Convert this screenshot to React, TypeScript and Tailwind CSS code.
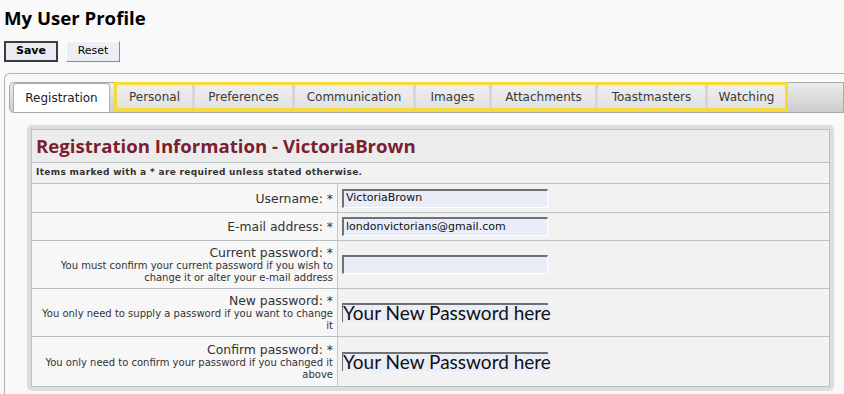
const tabs = [
  { label: 'Personal', w: 'w-[75px]' },
  { label: 'Preferences', w: 'w-[97px]' },
  { label: 'Communication', w: 'w-[118px]' },
  { label: 'Images', w: 'w-[73px]' },
  { label: 'Attachments', w: 'w-[103px]' },
  { label: 'Toastmasters', w: 'w-[107px]' },
  { label: 'Watching', w: 'w-[77px]' },
];

const rows = [
  { label: 'Username: *', h: 'h-[29px]', value: 'VictoriaBrown' },
  { label: 'E-mail address: *', h: 'h-[28px]', value: 'londonvictorians@gmail.com' },
  {
    label: 'Current password: *',
    h: 'h-[48px]',
    note: 'You must confirm your current password if you wish to change it or alter your e-mail address',
    value: '',
  },
  {
    label: 'New password: *',
    h: 'h-[48px]',
    note: 'You only need to supply a password if you want to change it',
    value: 'Your New Password here',
    big: true,
  },
  {
    label: 'Confirm password: *',
    h: 'h-[49px]',
    note: 'You only need to confirm your password if you changed it above',
    value: 'Your New Password here',
    big: true,
  },
];

export default function App() {
  return (
    <div className="min-h-screen bg-[#f9f9f9] font-['DejaVu_Sans',Verdana,sans-serif] text-[#222]">
      <h1 className="pl-[4px] pt-[6px] h-[41px] text-[18.6px] leading-[24px] font-bold font-['Open_Sans',sans-serif] text-black">
        My User Profile
      </h1>

      <div className="flex gap-[8px] pl-[4px] h-[32px]">
        <button className="w-[54px] h-[21px] bg-[#e9ecf3] border-2 border-[#3c3c3c] text-[11px] font-bold text-black">
          Save
        </button>
        <button className="w-[54px] h-[21px] bg-[#eceef3] border border-t-white border-l-white border-b-[#8a8a8a] border-r-[#8a8a8a] text-[11px] text-black">
          Reset
        </button>
      </div>

      <div className="ml-[4px] border-l border-t border-[#b4b4b4] rounded-tl-[6px] pt-[8px] pl-[4px] h-[321px]">
        <div className="flex items-end h-[31px] border border-[#a8a8a8] rounded-l-[5px] bg-gradient-to-b from-[#ececec] to-[#cdcdcd] pl-[3px]">
          <div className="w-[97px] h-[29px] bg-white border border-b-0 border-[#b0b0b0] rounded-t-[4px] flex items-center justify-center text-[12px] text-[#222]">
            Registration
          </div>
          <div className="ml-[4px] mb-[1px] h-[29px] flex gap-[3px] border-[3px] border-[#f4da3a] bg-[#d6d6d6]">
            {tabs.map((t) => (
              <div
                key={t.label}
                className={`${t.w} h-full flex items-center justify-center text-[12px] text-[#3a3a3a] bg-gradient-to-b from-[#eeeeee] to-[#e2e2e2]`}
              >
                {t.label}
              </div>
            ))}
          </div>
        </div>

        <div className="mt-[12px] ml-[18px] mr-[10px] border-[4px] border-[#dddddd] rounded-[5px]">
          <div className="border border-[#b9c2c2] bg-[#f2f2f2]">
            <div className="h-[33px] bg-[#ececec] border-b border-[#b9c2c2] pl-[4px] flex items-center text-[18.6px] font-bold font-['Open_Sans',sans-serif] text-[#7b1e30]">
              Registration Information - VictoriaBrown
            </div>
            <div className="h-[21px] border-b border-[#b9c2c2] pl-[4px] flex items-center text-[9px] tracking-[0.33px] font-bold text-[#333]">
              Items marked with a * are required unless stated otherwise.
            </div>
            {rows.map((r, i) => (
              <div
                key={r.label}
                className={`flex ${r.h} ${i < rows.length - 1 ? 'border-b border-[#b9c2c2]' : ''}`}
              >
                <div className="w-[306px] shrink-0 bg-[#f7f7f7] border-r border-[#c4c8c8] pr-[4px] flex flex-col justify-center items-end text-right">
                  <div className="text-[12.4px] leading-[15px] text-[#333]">{r.label}</div>
                  {r.note && (
                    <div className="text-[10px] leading-[12px] text-[#333] pl-[4px]">{r.note}</div>
                  )}
                </div>
                <div className="flex-1 flex items-center pl-[4px]">
                  {r.big ? (
                    <div className="w-[206px] h-[19px] bg-[#e8edf7] border-t-2 border-l border-t-[#707070] border-l-[#707070] whitespace-nowrap text-[19px] leading-[15px] font-['Lato',sans-serif] text-[#111]">
                      {r.value}
                    </div>
                  ) : (
                    <div className="w-[206px] h-[19px] bg-[#e8edf7] border-t-2 border-l-2 border-t-[#707070] border-l-[#707070] border-b border-r border-b-white border-r-white pl-[2px] flex items-center text-[11px] text-[#111]">
                      {r.value}
                    </div>
                  )}
                </div>
              </div>
            ))}
          </div>
        </div>
      </div>
    </div>
  );
}
